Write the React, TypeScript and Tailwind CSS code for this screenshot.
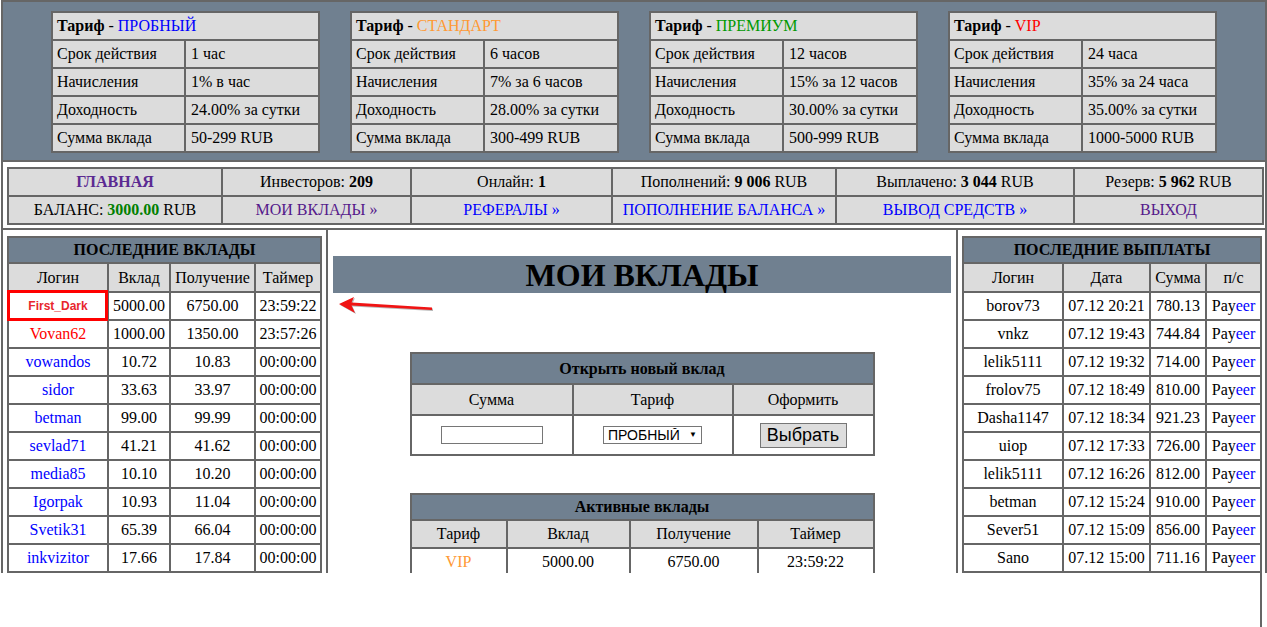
import React from 'react';

const serif = 'font-["Liberation_Serif","Times_New_Roman",serif]';
const sans = 'font-["Liberation_Sans",Arial,sans-serif]';

const tariffs = [
  { name: 'ПРОБНЫЙ', color: 'text-[#0000ff]', term: '1 час', accrual: '1% в час', profit: '24.00% за сутки', sum: '50-299 RUB' },
  { name: 'СТАНДАРТ', color: 'text-[#ff9933]', term: '6 часов', accrual: '7% за 6 часов', profit: '28.00% за сутки', sum: '300-499 RUB' },
  { name: 'ПРЕМИУМ', color: 'text-[#009900]', term: '12 часов', accrual: '15% за 12 часов', profit: '30.00% за сутки', sum: '500-999 RUB' },
  { name: 'VIP', color: 'text-[#ff0000]', term: '24 часа', accrual: '35% за 24 часа', profit: '35.00% за сутки', sum: '1000-5000 RUB' },
];

const deposits = [
  { login: 'First_Dark', color: 'text-[#e8262d]', sum: '5000.00', get: '6750.00', timer: '23:59:22', marked: true },
  { login: 'Vovan62', color: 'text-[#ff0000]', sum: '1000.00', get: '1350.00', timer: '23:57:26' },
  { login: 'vowandos', color: 'text-[#0000ff]', sum: '10.72', get: '10.83', timer: '00:00:00' },
  { login: 'sidor', color: 'text-[#0000ff]', sum: '33.63', get: '33.97', timer: '00:00:00' },
  { login: 'betman', color: 'text-[#0000ff]', sum: '99.00', get: '99.99', timer: '00:00:00' },
  { login: 'sevlad71', color: 'text-[#0000ff]', sum: '41.21', get: '41.62', timer: '00:00:00' },
  { login: 'media85', color: 'text-[#0000ff]', sum: '10.10', get: '10.20', timer: '00:00:00' },
  { login: 'Igorpak', color: 'text-[#0000ff]', sum: '10.93', get: '11.04', timer: '00:00:00' },
  { login: 'Svetik31', color: 'text-[#0000ff]', sum: '65.39', get: '66.04', timer: '00:00:00' },
  { login: 'inkvizitor', color: 'text-[#0000ff]', sum: '17.66', get: '17.84', timer: '00:00:00' },
];

const payouts = [
  ['borov73', '07.12 20:21', '780.13'],
  ['vnkz', '07.12 19:43', '744.84'],
  ['lelik5111', '07.12 19:32', '714.00'],
  ['frolov75', '07.12 18:49', '810.00'],
  ['Dasha1147', '07.12 18:34', '921.23'],
  ['uiop', '07.12 17:33', '726.00'],
  ['lelik5111', '07.12 16:26', '812.00'],
  ['betman', '07.12 15:24', '910.00'],
  ['Sever51', '07.12 15:09', '856.00'],
  ['Sano', '07.12 15:00', '711.16'],
];

const grey = 'bg-[#dcdcdc]';
const slate = 'bg-[#708090]';
const cell = 'flex items-center justify-center whitespace-nowrap';

function TariffTable({ t }: { t: (typeof tariffs)[number] }) {
  const rows = [
    ['Срок действия', t.term],
    ['Начисления', t.accrual],
    ['Доходность', t.profit],
    ['Сумма вклада', t.sum],
  ];
  return (
    <div className="grid w-[269px] grid-cols-[131px_1fr] gap-[2px] bg-[#666] p-[2px]">
      <div className={`col-span-2 flex h-[26px] items-center pl-[4px] ${grey}`}>
        <b>Тариф</b>&nbsp;-&nbsp;<span className={t.color}>{t.name}</span>
      </div>
      {rows.map(([k, v]) => (
        <React.Fragment key={k}>
          <div className={`flex h-[26px] items-center pl-[4px] ${grey}`}>{k}</div>
          <div className={`flex h-[26px] items-center pl-[5px] ${grey}`}>{v}</div>
        </React.Fragment>
      ))}
    </div>
  );
}

function NavBar() {
  const c = `${cell} h-[26px] ${grey}`;
  return (
    <div className="ml-[4px] mt-[5px] grid w-[1257px] grid-cols-[212px_187px_199px_222px_236px_187px] gap-[2px] bg-[#666] p-[2px]">
      <div className={`${c} font-bold text-[#5b2a92]`}>ГЛАВНАЯ</div>
      <div className={c}>Инвесторов:&nbsp;<b>209</b></div>
      <div className={c}>Онлайн:&nbsp;<b>1</b></div>
      <div className={c}>Пополнений:&nbsp;<b>9 006</b>&nbsp;RUB</div>
      <div className={c}>Выплачено:&nbsp;<b>3 044</b>&nbsp;RUB</div>
      <div className={c}>Резерв:&nbsp;<b>5 962</b>&nbsp;RUB</div>
      <div className={c}>БАЛАНС:&nbsp;<b className="text-[#008000]">3000.00</b>&nbsp;RUB</div>
      <div className={`${c} text-[#551a8b]`}>МОИ ВКЛАДЫ »</div>
      <div className={`${c} text-[#0000ff]`}>РЕФЕРАЛЫ »</div>
      <div className={`${c} text-[#0000ff]`}>ПОПОЛНЕНИЕ БАЛАНСА »</div>
      <div className={`${c} text-[#0000ff]`}>ВЫВОД СРЕДСТВ »</div>
      <div className={`${c} text-[#551a8b]`}>ВЫХОД</div>
    </div>
  );
}

function LastDeposits() {
  return (
    <div className="grid w-[315px] grid-cols-[98px_60px_83px_64px] gap-[2px] bg-[#666] p-[2px]">
      <div className={`col-span-4 ${cell} h-[24px] font-bold ${slate}`}>ПОСЛЕДНИЕ ВКЛАДЫ</div>
      {['Логин', 'Вклад', 'Получение', 'Таймер'].map((h) => (
        <div key={h} className={`${cell} h-[27px] ${grey}`}>{h}</div>
      ))}
      {deposits.map((d) => (
        <React.Fragment key={d.login}>
          <div className={`relative ${cell} h-[26px] bg-white ${d.color}`}>
            {d.marked ? (
              <>
                <span className={`${sans} text-[12px] font-bold`}>{d.login}</span>
                <div className="absolute -bottom-[2px] -left-[2px] -right-[1px] -top-[3px] border-[3px] border-[#ff0000]" />
              </>
            ) : (
              d.login
            )}
          </div>
          <div className={`${cell} h-[26px] bg-white`}>{d.sum}</div>
          <div className={`${cell} h-[26px] bg-white`}>{d.get}</div>
          <div className={`${cell} h-[26px] bg-white`}>{d.timer}</div>
        </React.Fragment>
      ))}
    </div>
  );
}

function LastPayouts() {
  return (
    <div className="grid w-[300px] grid-cols-[98px_85px_54px_53px] gap-[2px] bg-[#666] p-[2px]">
      <div className={`col-span-4 ${cell} h-[24px] font-bold ${slate}`}>ПОСЛЕДНИЕ ВЫПЛАТЫ</div>
      {['Логин', 'Дата', 'Сумма', 'п/с'].map((h) => (
        <div key={h} className={`${cell} h-[27px] ${grey}`}>{h}</div>
      ))}
      {payouts.map(([login, date, sum], i) => (
        <React.Fragment key={i}>
          <div className={`${cell} h-[26px] bg-white`}>{login}</div>
          <div className={`${cell} h-[26px] bg-white`}>{date}</div>
          <div className={`${cell} h-[26px] bg-white`}>{sum}</div>
          <div className={`${cell} h-[26px] bg-white`}>
            Pay<span className="text-[#0000ff]">eer</span>
          </div>
        </React.Fragment>
      ))}
    </div>
  );
}

function NewDeposit() {
  return (
    <div className="mx-auto mt-[38px] grid w-[465px] grid-cols-[160px_158px_139px] gap-[2px] bg-[#666] p-[2px]">
      <div className={`col-span-3 ${cell} h-[29px] font-bold ${slate}`}>Открыть новый вклад</div>
      <div className={`${cell} h-[29px] ${grey}`}>Сумма</div>
      <div className={`${cell} h-[29px] ${grey}`}>Тариф</div>
      <div className={`${cell} h-[29px] ${grey}`}>Оформить</div>
      <div className={`${cell} h-[38px] bg-white`}>
        <input type="text" className="h-[18px] w-[102px] border border-[#767676] bg-white outline-none" />
      </div>
      <div className={`${cell} h-[38px] bg-white`}>
        <div className={`flex h-[18px] w-[99px] items-center border border-[#767676] bg-white ${sans} text-[14px] text-black`}>
          <span className="w-[78px] overflow-hidden whitespace-nowrap pl-[4px]">ПРОБНЫЙ (1%)</span>
          <span className="ml-auto pr-[4px] text-[8px]">▼</span>
        </div>
      </div>
      <div className={`${cell} h-[38px] bg-white`}>
        <button className={`h-[25px] w-[87px] border border-[#767676] bg-[#dddddd] ${sans} text-[18px] leading-none text-black`}>
          Выбрать
        </button>
      </div>
    </div>
  );
}

function ActiveDeposits() {
  return (
    <div className="mx-auto mt-[37px] grid w-[465px] grid-cols-[94px_121px_126px_114px] gap-[2px] bg-[#666] p-[2px]">
      <div className={`col-span-4 ${cell} h-[24px] font-bold ${slate}`}>Активные вклады</div>
      {['Тариф', 'Вклад', 'Получение', 'Таймер'].map((h) => (
        <div key={h} className={`${cell} h-[26px] ${grey}`}>{h}</div>
      ))}
      <div className={`${cell} h-[26px] bg-white text-[#ff9933]`}>VIP</div>
      <div className={`${cell} h-[26px] bg-white`}>5000.00</div>
      <div className={`${cell} h-[26px] bg-white`}>6750.00</div>
      <div className={`${cell} h-[26px] bg-white`}>23:59:22</div>
    </div>
  );
}

export default function App() {
  return (
    <div className={`h-[627px] w-[1267px] overflow-hidden bg-white text-[16px] leading-none text-black ${serif}`}>
      <div className="ml-[1px] w-[1266px] border-x-2 border-[#666]">
        {/* tariff plans */}
        <div className={`flex h-[162px] items-start gap-[30px] border-y-2 border-[#666] pl-[48px] pt-[9px] ${slate}`}>
          {tariffs.map((t) => (
            <TariffTable key={t.name} t={t} />
          ))}
        </div>

        <NavBar />

        <div className="mt-[3px] flex h-[345px] overflow-hidden border-t-2 border-[#666]">
          <div className="w-[325px] shrink-0 border-r-2 border-[#666] pl-[4px] pt-[6px]">
            <LastDeposits />
          </div>

          <div className="w-[630px] shrink-0 border-r-2 border-[#666] px-[5px] pt-[26px]">
            <div className={`flex h-[37px] items-center justify-center text-[32px] font-bold ${slate}`}>МОИ ВКЛАДЫ</div>
            <div className="mt-[3px] h-[18px] pl-[5px]">
              <svg width="96" height="18" viewBox="0 0 96 18">
                <path d="M1 8 L16 1 L13.5 6.5 L94 11.5 L94 14 L13.5 9.5 L17 17 Z" fill="#b8b8b8" transform="translate(1 1)" />
                <path d="M1 8 L16 1 L13.5 6.5 L94 11.5 L94 14 L13.5 9.5 L17 17 Z" fill="#f01414" />
              </svg>
            </div>
            <NewDeposit />
            <ActiveDeposits />
          </div>

          <div className="flex-1 pl-[4px] pt-[6px]">
            <LastPayouts />
          </div>
        </div>
      </div>
      <div className="flex h-[54px]">
        <div className="ml-[1260px] w-[2px] bg-[#666]" />
      </div>
    </div>
  );
}
